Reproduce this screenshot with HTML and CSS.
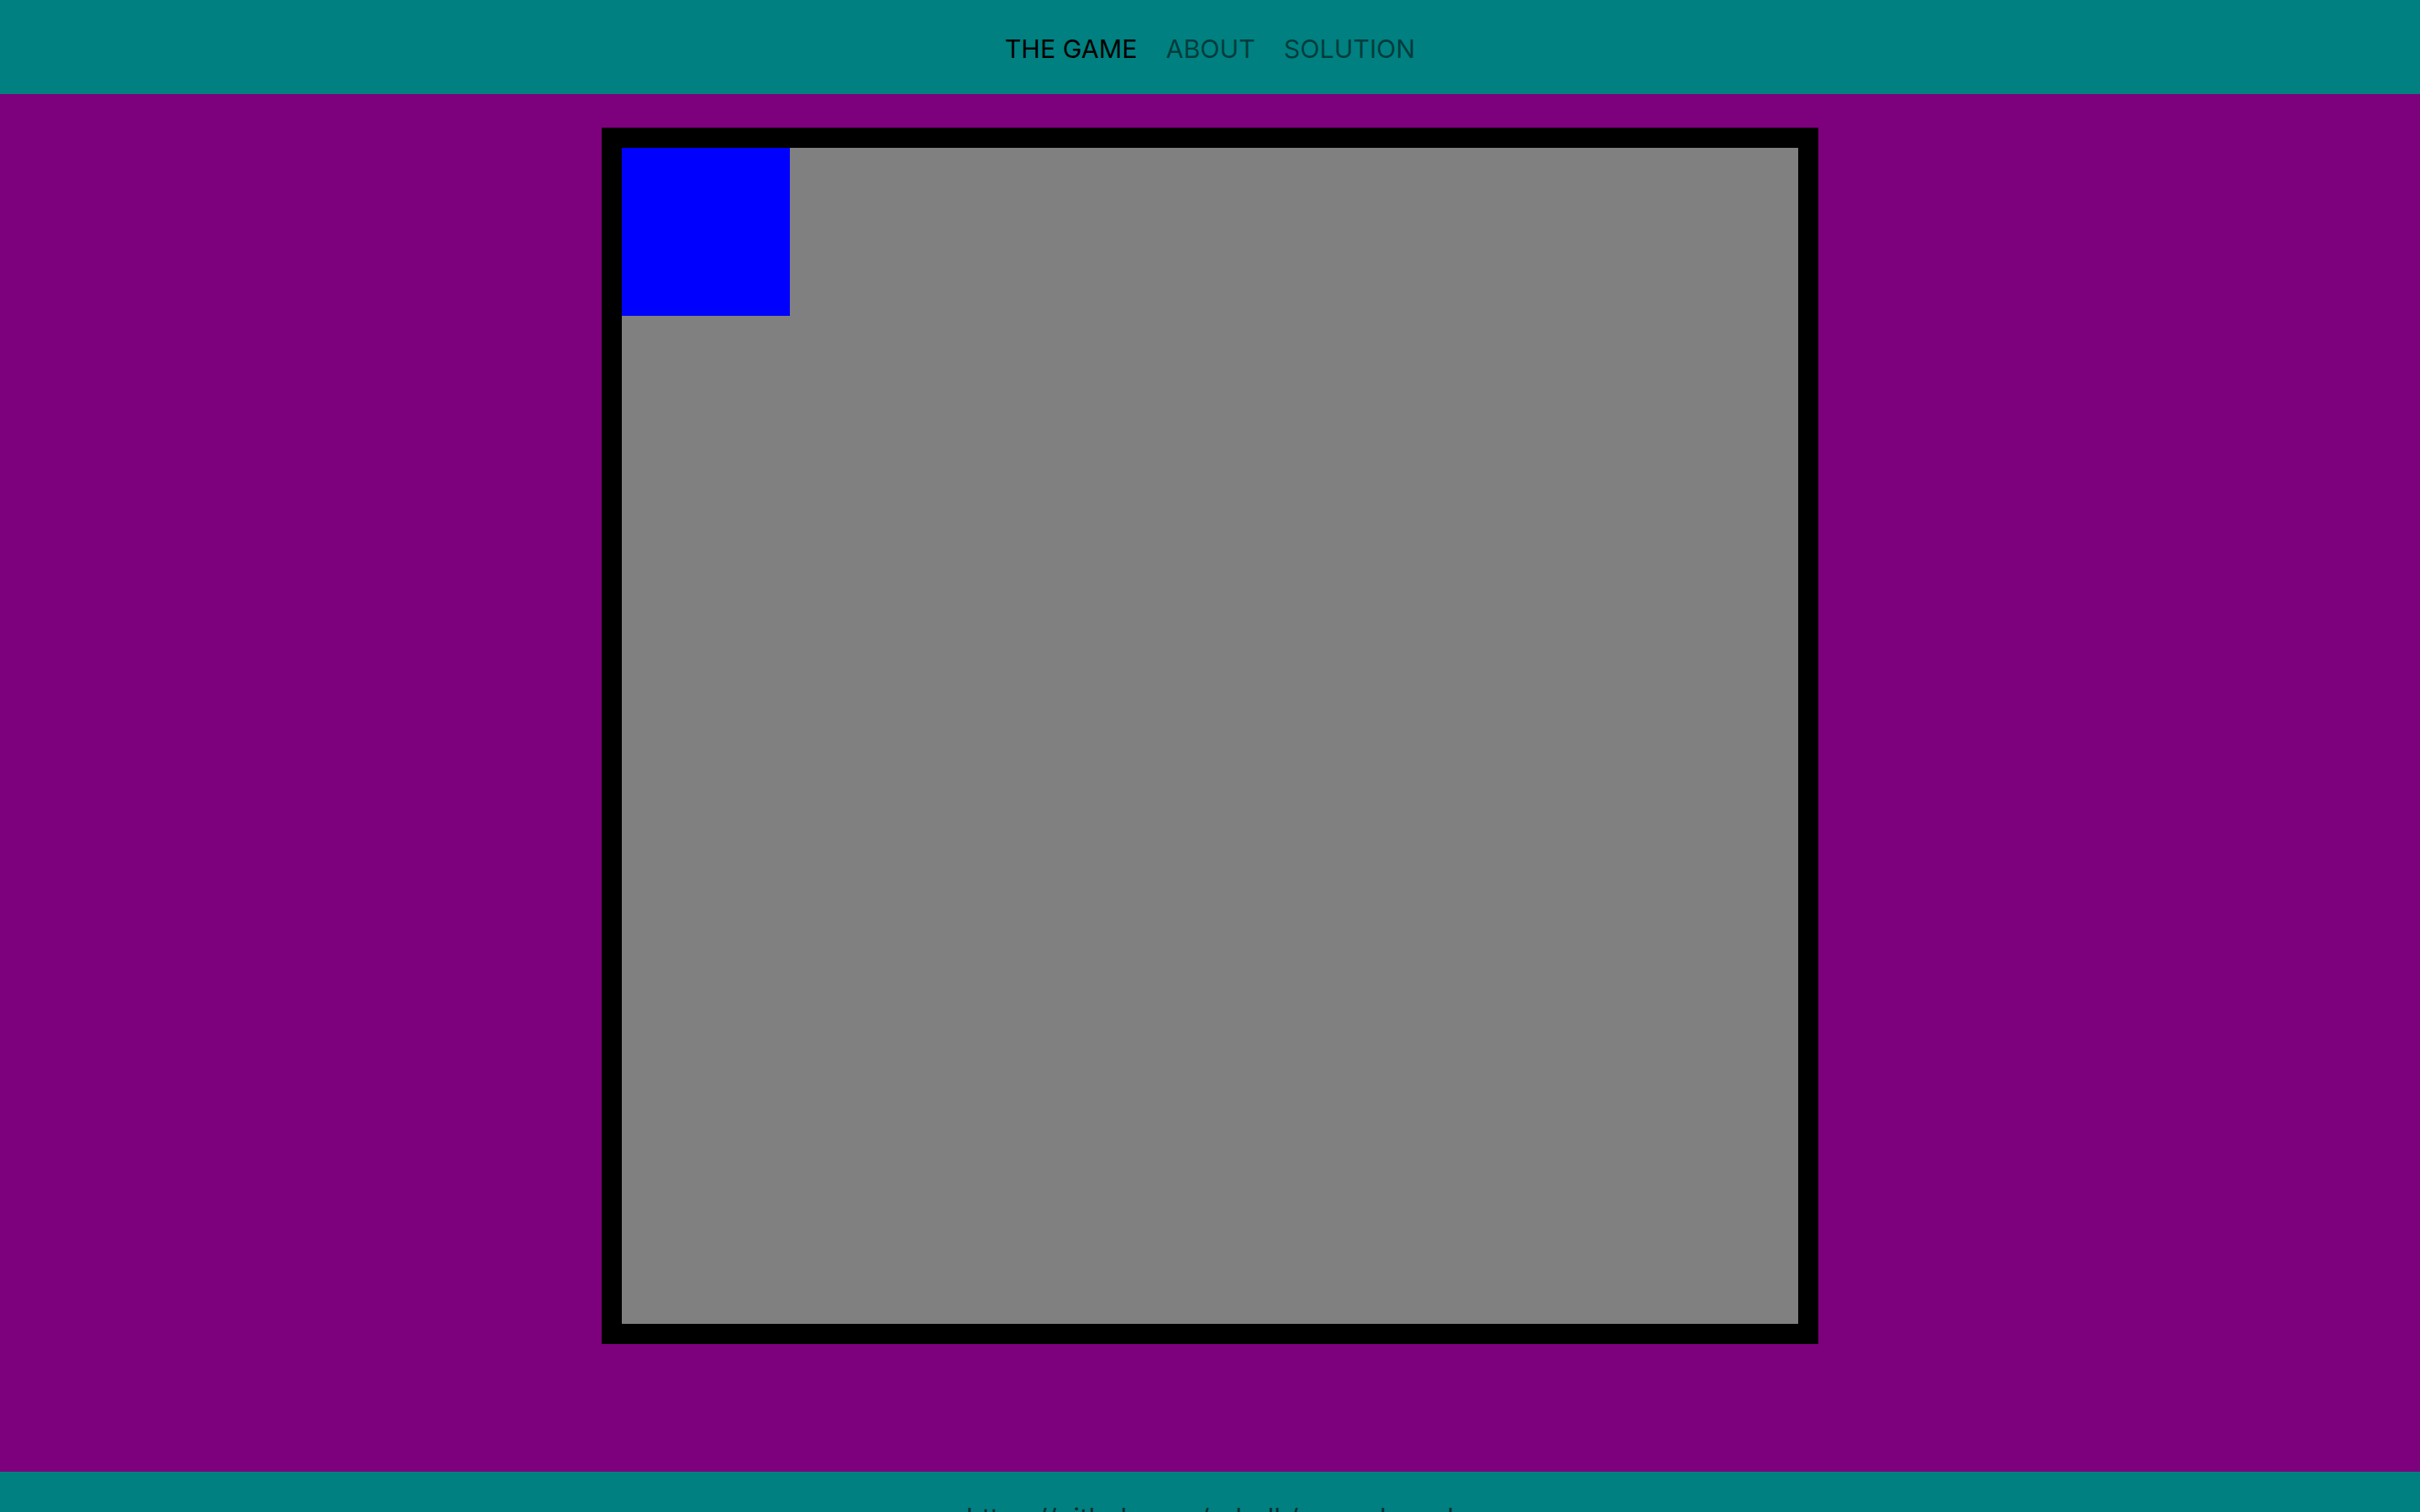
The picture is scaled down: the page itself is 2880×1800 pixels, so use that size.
FILE: index.html
```html
<!DOCTYPE html>
<html lang="en">
<head>
<meta charset="utf-8">
<title>The Game</title>
<link rel="stylesheet" href="styles.css">
</head>
<body>
<header class="topbar">
  <nav class="nav">
    <a class="nav-link active" href="#">THE GAME</a>
    <a class="nav-link" href="#">ABOUT</a>
    <a class="nav-link" href="#">SOLUTION</a>
  </nav>
</header>
<main class="stage">
  <div class="board">
    <div class="player"></div>
  </div>
</main>
<footer class="footer">
  <a class="footer-link" href="#">https://github.com/odedk/maze-board</a>
</footer>
</body>
</html>
```

FILE: styles.css
```css
* { box-sizing: border-box; }
html, body {
  margin: 0;
  padding: 0;
  background: #7d007d;
  font-family: Inter, "Noto Sans", sans-serif;
}
.topbar {
  height: 112px;
  padding-top: 4px;
  background: #008080;
  display: flex;
  align-items: center;
  justify-content: center;
}
.nav {
  display: flex;
  gap: 34px;
}
.nav-link {
  font-size: 30.4px;
  line-height: 40px;
  color: rgba(0, 0, 0, 0.55);
  text-decoration: none;
}
.nav-link.active { color: #000; }
.stage {
  display: flex;
  justify-content: center;
  align-items: flex-start;
  padding: 40px 0 152px;
  background: #7d007d;
}
.board {
  width: 1448px;
  height: 1448px;
  border: 24px solid #000;
  background: #808080;
}
.player {
  width: 200px;
  height: 200px;
  background: #0000ff;
}
.footer {
  background: #008080;
  text-align: center;
  padding: 32px 0;
}
.footer-link {
  font-size: 32px;
  line-height: 48px;
  color: #0b2f31;
  text-decoration: none;
}
```
